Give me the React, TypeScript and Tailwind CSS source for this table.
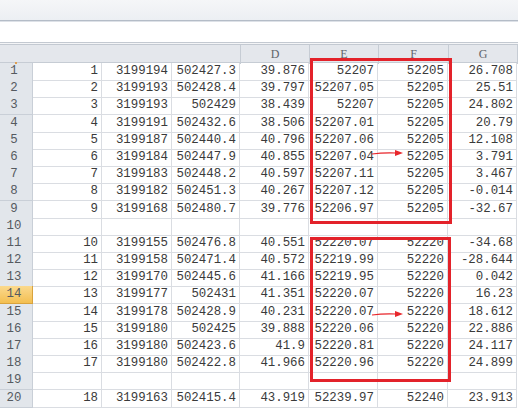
const rows: (string[] | null)[] = [
  ['1', '3199194', '502427.3', '39.876', '52207', '52205', '26.708'],
  ['2', '3199193', '502428.4', '39.797', '52207.05', '52205', '25.51'],
  ['3', '3199193', '502429', '38.439', '52207', '52205', '24.802'],
  ['4', '3199191', '502432.6', '38.506', '52207.01', '52205', '20.79'],
  ['5', '3199187', '502440.4', '40.796', '52207.06', '52205', '12.108'],
  ['6', '3199184', '502447.9', '40.855', '52207.04', '52205', '3.791'],
  ['7', '3199183', '502448.2', '40.597', '52207.11', '52205', '3.467'],
  ['8', '3199182', '502451.3', '40.267', '52207.12', '52205', '-0.014'],
  ['9', '3199168', '502480.7', '39.776', '52206.97', '52205', '-32.67'],
  null,
  ['10', '3199155', '502476.8', '40.551', '52220.07', '52220', '-34.68'],
  ['11', '3199158', '502471.4', '40.572', '52219.99', '52220', '-28.644'],
  ['12', '3199170', '502445.6', '41.166', '52219.95', '52220', '0.042'],
  ['13', '3199177', '502431', '41.351', '52220.07', '52220', '16.23'],
  ['14', '3199178', '502428.9', '40.231', '52220.07', '52220', '18.612'],
  ['15', '3199180', '502425', '39.888', '52220.06', '52220', '22.886'],
  ['16', '3199180', '502423.6', '41.9', '52220.81', '52220', '24.117'],
  ['17', '3199180', '502422.8', '41.966', '52220.96', '52220', '24.899'],
  null,
  ['18', '3199163', '502415.4', '43.919', '52239.97', '52240', '23.913'],
];

const cols = 'grid grid-cols-[33px_69px_70px_68px_69px_69px_70px_69px_1px]';

function Arrow({ top }: { top: number }) {
  return (
    <svg
      className="absolute left-[371px] h-[10px] w-[34px]"
      style={{ top }}
      viewBox="0 0 34 10"
    >
      <path d="M1 6 Q12 4.5 25 5" stroke="#e8262b" strokeWidth="1.2" fill="none" />
      <path d="M24 2 L32 5 L24 8 Z" fill="#e8262b" />
    </svg>
  );
}

export default function App() {
  return (
    <div className="relative h-[420px] w-[518px] overflow-hidden bg-white font-['Liberation_Mono',monospace] text-[12.4px] text-[#3a3a3a]">
      {/* ribbon strip */}
      <div className="h-[20px] bg-gradient-to-b from-[#f5f6f8] to-[#eceff3]" />
      <div className="h-[1px] bg-[#b4bcc7]" />
      <div className="h-[1px] bg-[#dde1e7]" />

      {/* formula bar */}
      <div className="h-[20px] bg-white" />

      {/* column headers */}
      <div className="h-[1px] bg-[#c3c9d1]" />
      <div className="h-[1px] bg-[#f4f5f7]" />
      <div className="h-[1px] bg-[#c3c9d1]" />
      <div className={`${cols} h-[18px] border-b border-[#c6ccd4] bg-[#e4e7ec] text-[12px] text-[#5f646a]`}>
        <div className="relative col-span-4">
          <span className="absolute bottom-0 left-[15px] h-[2px] w-[2px] bg-[#e0a050]" />
        </div>
        {['D', 'E', 'F', 'G'].map((c) => (
          <div
            key={c}
            className="flex items-center justify-center border-l border-[#c6ccd4] font-['Liberation_Serif',serif] pb-[1px]"
          >
            {c}
          </div>
        ))}
        <div className="border-l border-[#c6ccd4]" />
      </div>

      {/* rows */}
      {rows.map((r, i) => (
        <div key={i} className={`${cols} h-[17.2px] leading-[17px]`}>
          <div
            className={`border-b border-r pr-[4px] text-center text-[#555a60] ${
              i === 13
                ? 'border-[#d9a33d] bg-gradient-to-b from-[#fbd98d] to-[#f3bf4f]'
                : 'border-[#c9cfd7] bg-[#e2e6eb]'
            }`}
          >
            {i + 1}
          </div>
          {Array.from({ length: 7 }).map((_, j) => (
            <div
              key={j}
              className="overflow-visible whitespace-nowrap border-b border-r border-[#dadde2] pr-[3px] text-right"
            >
              {r ? r[j] : ''}
            </div>
          ))}
          <div />
        </div>
      ))}

      {/* highlight boxes */}
      <div className="absolute left-[310px] top-[58px] h-[166px] w-[142px] border-[3px] border-[#e3222a]" />
      <div className="absolute left-[310px] top-[237px] h-[145px] w-[141px] border-[3px] border-[#e3222a]" />
      <Arrow top={148} />
      <Arrow top={309} />
    </div>
  );
}
